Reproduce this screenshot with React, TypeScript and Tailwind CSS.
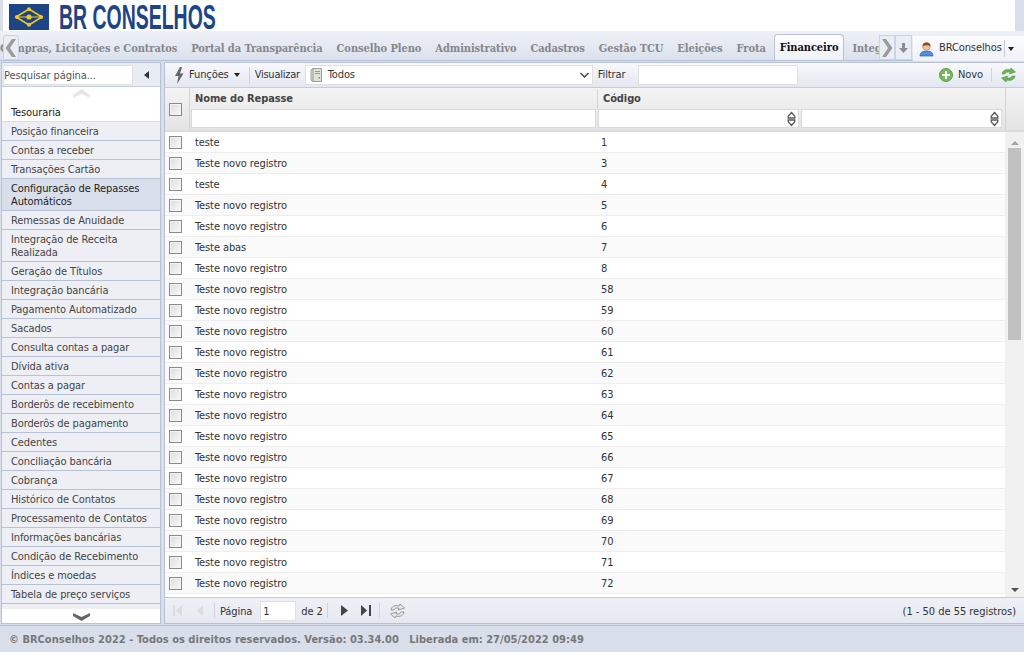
const tabs = ['Compras, Licitações e Contratos', 'Portal da Transparência', 'Conselho Pleno', 'Administrativo', 'Cadastros', 'Gestão TCU', 'Eleições', 'Frota'];

const menu = [
  'Posição financeira',
  'Contas a receber',
  'Transações Cartão',
  'Configuração de Repasses Automáticos',
  'Remessas de Anuidade',
  'Integração de Receita Realizada',
  'Geração de Títulos',
  'Integração bancária',
  'Pagamento Automatizado',
  'Sacados',
  'Consulta contas a pagar',
  'Dívida ativa',
  'Contas a pagar',
  'Borderôs de recebimento',
  'Borderôs de pagamento',
  'Cedentes',
  'Conciliação bancária',
  'Cobrança',
  'Histórico de Contatos',
  'Processamento de Contatos',
  'Informações bancárias',
  'Condição de Recebimento',
  'Índices e moedas',
  'Tabela de preço serviços',
];

const rows: [string, number][] = [
  ['teste', 1],
  ['Teste novo registro', 3],
  ['teste', 4],
  ['Teste novo registro', 5],
  ['Teste novo registro', 6],
  ['Teste abas', 7],
  ['Teste novo registro', 8],
  ['Teste novo registro', 58],
  ['Teste novo registro', 59],
  ['Teste novo registro', 60],
  ['Teste novo registro', 61],
  ['Teste novo registro', 62],
  ['Teste novo registro', 63],
  ['Teste novo registro', 64],
  ['Teste novo registro', 65],
  ['Teste novo registro', 66],
  ['Teste novo registro', 67],
  ['Teste novo registro', 68],
  ['Teste novo registro', 69],
  ['Teste novo registro', 70],
  ['Teste novo registro', 71],
  ['Teste novo registro', 72],
];

function Checkbox() {
  return <span className="block w-[13px] h-[13px] border border-[#8a8a8a] bg-gradient-to-br from-[#dcdcdc] to-[#fafafa] shadow-[inset_0_0_0_1px_#f4f4f4]" />;
}

function Spinner() {
  return (
    <svg width="9" height="16" viewBox="0 0 9 16">
      <path d="M4.5 1.5 L7.8 5.2 V7 H1.2 V5.2 Z M1.2 9 H7.8 V10.8 L4.5 14.5 L1.2 10.8 Z" fill="#fff" stroke="#5a5a5a" strokeWidth="1.3" />
    </svg>
  );
}

function Logo() {
  return (
    <svg width="40" height="26" viewBox="0 0 40 26" className="shrink-0">
      <rect width="40" height="26" fill="#1d4586" />
      <path d="M20 5 L33 13 L20 21 L7 13 Z" fill="none" stroke="#f2c81e" strokeWidth="1.5" />
      <circle cx="20" cy="13" r="2.6" fill="#f2c81e" />
      <circle cx="20" cy="5.2" r="2" fill="#f2c81e" />
      <circle cx="20" cy="20.8" r="2" fill="#f2c81e" />
      <circle cx="8" cy="13" r="2" fill="#f2c81e" />
      <circle cx="32" cy="13" r="2" fill="#f2c81e" />
      <path d="M10 13 H30" stroke="#f2c81e" strokeWidth="1" />
    </svg>
  );
}

function UserIcon() {
  return (
    <svg width="15" height="16" viewBox="0 0 15 16">
      <path d="M1 15 C1 11 4 10 7.5 10 C11 10 14 11 14 15 Z" fill="#4f8fdc" stroke="#2f63a8" strokeWidth="0.7" />
      <circle cx="7.5" cy="5.5" r="3.8" fill="#f0c39a" stroke="#a5704a" strokeWidth="0.5" />
      <path d="M3.6 5.5 C3 0 12 0 11.4 5.5 C9.5 3.8 6 3.8 3.6 5.5 Z" fill="#8a4b20" />
    </svg>
  );
}

function ServerIcon() {
  return (
    <svg width="13" height="16" viewBox="0 0 13 16">
      <path d="M3 1.5 H11.5 V14.5 H3 L1 13 V3 Z" fill="#dfe3da" stroke="#7f8a78" strokeWidth="0.8" />
      <path d="M3 1.5 V14.5" stroke="#7f8a78" strokeWidth="0.8" />
      <path d="M5 4.5 H10 M5 6.5 H10" stroke="#8a9484" strokeWidth="0.9" />
      <rect x="8.5" y="10" width="1.5" height="1.5" fill="#4aa84a" />
    </svg>
  );
}

function RefreshIcon({ color, dark }: { color: string; dark: string }) {
  return (
    <svg width="17" height="16" viewBox="0 0 17 16">
      <path d="M2 7 C2.5 3.5 6 1.8 10 3 L11 1 L15.5 5 L9.5 7 L10 5.2 C7.5 4.5 5.5 5.3 4.8 7 Z" fill={color} stroke={dark} strokeWidth="0.6" />
      <path d="M15 9 C14.5 12.5 11 14.2 7 13 L6 15 L1.5 11 L7.5 9 L7 10.8 C9.5 11.5 11.5 10.7 12.2 9 Z" fill={color} stroke={dark} strokeWidth="0.6" />
    </svg>
  );
}

function TabArrow({ right }: { right?: boolean }) {
  return (
    <svg width="12" height="18" viewBox="0 0 12 18">
      <path d={right ? 'M1 0 H5 L11.5 9 L5 18 H1 L7 9 Z' : 'M11 0 H7 L0.5 9 L7 18 H11 L5 9 Z'} fill="#9c9c9c" />
    </svg>
  );
}

export default function App() {
  return (
    <div className="w-[1024px] h-[652px] overflow-hidden flex flex-col bg-[#d9dfea] font-['DejaVu_Sans_Condensed','DejaVu_Sans',sans-serif] [font-stretch:condensed] text-[11px] tracking-[-0.1px] text-[#333]">
      {/* logo */}
      <header className="h-[31px] shrink-0 mx-[3px] mr-[9px] bg-white flex items-start gap-[10px] pl-[6px] pt-[4px] overflow-hidden">
        <Logo />
        <span className="font-['Liberation_Sans',sans-serif] font-bold text-[35px] leading-[26px] tracking-normal text-[#1d4586] origin-left scale-x-[0.556] whitespace-nowrap">BR CONSELHOS</span>
      </header>

      {/* tabs */}
      <nav className="relative h-[30px] shrink-0 flex bg-gradient-to-b from-[#eef1f7] to-[#dbe1ec] border-b border-[#b8c2d6]">
        <div className="absolute left-[3px] top-[4px] w-[16px] h-[25px] z-10 bg-[#e9edf4] border border-[#ccd3e0] rounded-t-[3px] flex items-center justify-center">
          <TabArrow />
        </div>
        <div className="w-[879px] overflow-hidden flex items-end pl-[19px] font-['DejaVu_Serif_Condensed','DejaVu_Serif',serif] font-bold text-[#85878c] text-[11px] tracking-[-0.08px]">
          <div className="ml-[-26px] flex items-end whitespace-nowrap">
            {tabs.map((t) => (
              <span key={t} className="h-[24px] pt-[1px] leading-[24px] px-[7px]">{t}</span>
            ))}
            <span className="h-[26px] pt-[1px] leading-[24px] px-[5px] ml-[1px] mr-[5px] bg-gradient-to-b from-white to-[#eef1f7] border border-b-0 border-[#b8c2d6] rounded-t-[4px] text-[#111]">Financeiro</span>
            <span className="h-[24px] pt-[1px] leading-[24px] px-[3px]">Integração</span>
          </div>
        </div>
        <div className="absolute left-[879px] top-[4px] w-[16px] h-[25px] bg-[#e9edf4] border border-[#ccd3e0] flex items-center justify-center">
          <TabArrow right />
        </div>
        <div className="absolute left-[895px] top-[4px] w-[17px] h-[25px] bg-[#e9edf4] border border-[#ccd3e0] flex items-center justify-center">
          <svg width="9" height="10" viewBox="0 0 9 10"><path d="M3 0 H6 V5 H9 L4.5 10 L0 5 H3 Z" fill="#8d8d8d" /></svg>
        </div>
        <div className="absolute left-[913px] top-[5px] h-[25px] w-[111px] bg-gradient-to-b from-[#fbfcfe] to-[#eef1f7] flex items-center pl-[6px] text-[#333]">
          <UserIcon />
          <span className="ml-[5px]">BRConselhos</span>
          <span className="ml-[2px] h-[17px] border-l border-[#c8c8c8]" />
          <span className="ml-[3px] border-x-[3px] border-x-transparent border-t-[4px] border-t-[#222]" />
        </div>
      </nav>

      <div className="flex-1 min-h-0 flex pl-[1px] pt-[1px]">
        {/* sidebar */}
        <aside className="w-[160px] shrink-0 border border-[#b8c2d6] flex flex-col bg-white">
          <div className="h-[24px] shrink-0 flex items-center bg-[#e8ecf3] border-b border-[#c5cddc]">
            <input readOnly placeholder="Pesquisar página..." className="w-[130px] h-[20px] ml-[1px] pt-[1px] bg-white border border-[#dfdfdf] text-[11px] text-[#444] placeholder:text-[#555] outline-none" />
            <span className="ml-[11px] border-y-[4px] border-y-transparent border-r-[5px] border-r-[#333]" />
          </div>
          <div className="h-[13px] shrink-0 flex items-center justify-center">
            <svg width="17" height="9" viewBox="0 0 17 9"><path d="M0 6 L8.5 0 L17 6 V9 L8.5 5 L0 9 Z" fill="#e6e6e6" /></svg>
          </div>
          <div className="h-[22px] shrink-0 pl-[9px] pt-[5px] flex items-center text-[#222] border-b border-[#d8dde8]">Tesouraria</div>
          <ul className="shrink-0">
            {menu.map((m) => (
              <li
                key={m}
                className={`pl-[9px] pr-[6px] pt-[3px] pb-[2px] leading-[13px] border-b border-[#b8c2d6] ${m.startsWith('Configura') ? 'bg-[#d9dfea] text-[#222]' : 'bg-[#eeeff5] text-[#444]'}`}
              >
                {m}
              </li>
            ))}
          </ul>
          <div className="h-[5px] shrink-0 bg-[#eeeff5]" />
          <div className="flex-1 flex items-center justify-center">
            <svg width="17" height="9" viewBox="0 0 17 9"><path d="M0 1 L8.5 5 L17 1 V4 L8.5 9 L0 4 Z" fill="#666" /></svg>
          </div>
        </aside>

        <main className="ml-[3px] flex-1 min-w-0 flex flex-col border-l border-t border-b border-[#b8c2d6] bg-white">
          {/* toolbar */}
          <div className="h-[25px] shrink-0 flex items-center bg-gradient-to-b from-[#f8f9fc] to-[#e3e7f0] border-b border-[#c5cddc] pl-[9px] text-[#333]">
            <svg width="10" height="17" viewBox="0 0 10 17"><path d="M6 0 L1 9 H4.5 L3 17 L9.5 6.5 H6 L8 0 Z" fill="#666" /></svg>
            <span className="ml-[5px] pt-[1px]">Funções</span>
            <span className="ml-[5px] border-x-[3px] border-x-transparent border-t-[4px] border-t-[#222]" />
            <span className="ml-[9px] h-[17px] border-l border-[#d0d4dc]" />
            <span className="ml-[5px] w-[45px] pt-[1px] whitespace-nowrap tracking-[-0.25px]">Visualizar</span>
            <div className="ml-[5px] w-[288px] h-[20px] bg-white border border-[#dfdfdf] flex items-center pl-[4px] pr-[3px]">
              <ServerIcon />
              <span className="ml-[5px] flex-1 pt-[1px]">Todos</span>
              <svg width="9" height="6" viewBox="0 0 9 6"><path d="M0.5 1 L4.5 5 L8.5 1" fill="none" stroke="#444" strokeWidth="1.4" /></svg>
            </div>
            <span className="ml-[5px] w-[30px] pt-[1px]">Filtrar</span>
            <div className="ml-[10px] w-[160px] h-[20px] bg-white border border-[#dfdfdf]" />
            <div className="ml-auto flex items-center pr-[7px]">
              <span className="w-[14px] h-[14px] rounded-full bg-[#74b85f] border border-[#5c9e4a] flex items-center justify-center">
                <svg width="8" height="8" viewBox="0 0 8 8"><path d="M3 0 H5 V3 H8 V5 H5 V8 H3 V5 H0 V3 H3 Z" fill="#fff" /></svg>
              </span>
              <span className="ml-[5px] pt-[1px]">Novo</span>
              <span className="ml-[8px] h-[14px] border-l border-[#d0d4dc]" />
              <span className="ml-[8px]"><RefreshIcon color="#6cb35a" dark="#4f9340" /></span>
            </div>
          </div>

          {/* grid head */}
          <div className="h-[44px] shrink-0 flex bg-gradient-to-b from-[#f4f4f4] to-[#e4e4e4] border-b-2 border-[#dcdcdc]">
            <div className="w-[25px] shrink-0 flex items-center pl-[4px] border-r border-[#d4d4d4]"><Checkbox /></div>
            <div className="flex-1 min-w-0 flex flex-col">
              <div className="h-[21px] flex items-center font-bold text-[#444] pt-[1px]">
                <span className="w-[407px] pl-[5px]">Nome do Repasse</span>
                <span className="pl-[5px] border-l border-[#d4d4d4] h-full flex items-center">Código</span>
              </div>
              <div className="flex pl-[1px] gap-[2px]">
                <div className="w-[405px] h-[19px] bg-white border border-[#dadada]" />
                <div className="w-[201px] h-[19px] bg-white border border-[#dadada] flex items-center justify-end pr-[2px]"><Spinner /></div>
                <div className="w-[201px] h-[19px] bg-white border border-[#dadada] flex items-center justify-end pr-[2px]"><Spinner /></div>
              </div>
            </div>
            <div className="w-[19px] shrink-0 border-l border-[#d4d4d4]" />
          </div>

          {/* grid body */}
          <div className="flex-1 min-h-0 flex">
            <div className="flex-1 min-w-0 overflow-hidden">
              {rows.map(([name, code], i) => (
                <div key={i} className={`h-[21px] flex items-center border-b border-[#eeeeee] ${i % 2 ? 'bg-[#fafafa]' : 'bg-white'}`}>
                  <div className="w-[25px] shrink-0 pl-[4px]"><Checkbox /></div>
                  <span className="w-[406px] pl-[5px] pt-[2px] shrink-0">{name}</span>
                  <span className="pl-[5px] pt-[2px]">{code}</span>
                </div>
              ))}
              <div className="h-[21px] flex items-center">
                <div className="w-[25px] shrink-0 pl-[4px]"><Checkbox /></div>
              </div>
            </div>
            <div className="w-[19px] shrink-0 bg-[#f1f1f1] flex flex-col items-center pt-[9px] pb-[5px]">
              <span className="border-x-[4px] border-x-transparent border-b-[4px] border-b-[#a3a3a3]" />
              <div className="mt-[3px] w-[13px] h-[192px] bg-[#c1c1c1]" />
              <span className="mt-auto border-x-[4px] border-x-transparent border-t-[4px] border-t-[#505050]" />
            </div>
          </div>

          {/* pager */}
          <div className="h-[26px] shrink-0 flex items-center bg-gradient-to-b from-[#eef0f6] to-[#e6e9f1] border-t border-[#c5cddc] pl-[8px] text-[#333]">
            <svg width="10" height="11" viewBox="0 0 10 11"><path d="M0 0 H2 V11 H0 Z M9 0 V11 L3 5.5 Z" fill="#dcdcdc" /></svg>
            <svg width="7" height="11" viewBox="0 0 7 11" className="ml-[14px]"><path d="M6 0 V11 L0 5.5 Z" fill="#dcdcdc" /></svg>
            <span className="ml-[10px] h-[15px] border-l border-[#d0d4dc]" />
            <span className="ml-[5px] pt-[3px]">Página</span>
            <div className="ml-[8px] w-[36px] h-[20px] bg-white border border-[#dfdfdf] px-[2px] leading-[20px]">1</div>
            <span className="ml-[5px] pt-[3px]">de 2</span>
            <span className="ml-[4px] h-[15px] border-l border-[#d0d4dc]" />
            <svg width="7" height="11" viewBox="0 0 7 11" className="ml-[13px]"><path d="M0 0 V11 L7 5.5 Z" fill="#444" /></svg>
            <svg width="10" height="11" viewBox="0 0 10 11" className="ml-[13px]"><path d="M0 0 V11 L6 5.5 Z M8 0 H10 V11 H8 Z" fill="#444" /></svg>
            <span className="ml-[8px] h-[15px] border-l border-[#d0d4dc]" />
            <span className="ml-[9px]"><RefreshIcon color="#e8e8e8" dark="#666" /></span>
            <span className="ml-auto pr-[8px] pt-[3px] tracking-[-0.02px]">(1 - 50 de 55 registros)</span>
          </div>
        </main>
      </div>

      {/* footer */}
      <footer className="h-[27px] shrink-0 mt-[1px] border-t border-[#b8c2d6] pl-[9px] pt-[2px] flex items-center font-bold text-[11px] tracking-[0.02px] text-[#777] whitespace-pre">
        © BRConselhos 2022 - Todos os direitos reservados. Versão: 03.34.00   Liberada em: 27/05/2022 09:49
      </footer>
    </div>
  );
}
